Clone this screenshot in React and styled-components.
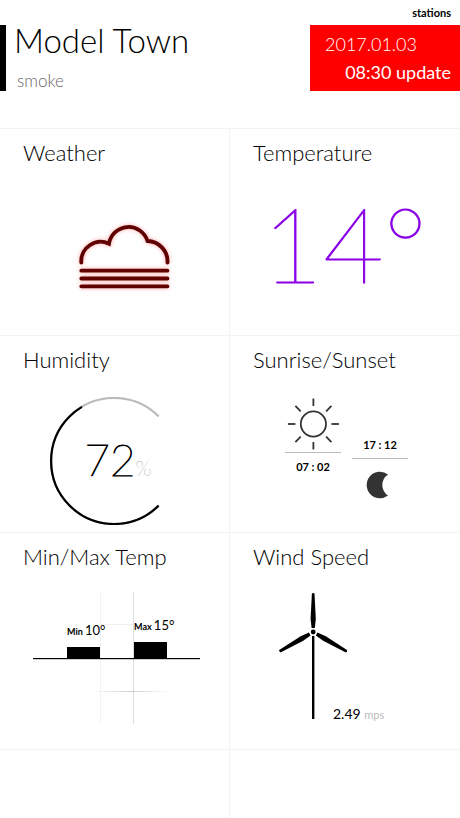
import React from "react";
import styled, { createGlobalStyle } from "styled-components";

const GlobalStyle = createGlobalStyle`
	* {
		box-sizing: border-box;
	}
	body {
		margin: 0;
		background: #fff;
		color: #000;
		font-family: Lato, sans-serif;
	}
`;

const Page = styled.main`
	display: flex;
	flex-direction: column;
	min-height: 100vh;
`;

const TopBar = styled.nav`
	display: flex;
	justify-content: flex-end;
	height: 25px;
	padding: 6px 9px 0;
`;

const StationsLink = styled.a`
	color: #000;
	font-size: 11px;
	font-weight: 700;
	line-height: 14px;
	text-decoration: none;
`;

const Header = styled.header`
	display: flex;
	justify-content: space-between;
	padding-bottom: 37px;
`;

const Place = styled.div`
	border-left: 6px solid #000;
	padding-left: 8px;
`;

const City = styled.h1`
	margin: 0;
	font-size: 33px;
	font-weight: 300;
	line-height: 30px;
`;

const Condition = styled.p`
	margin: 15px 0 0 3px;
	color: #666;
	font-size: 17px;
	font-weight: 300;
	line-height: 21px;
`;

const Updated = styled.div`
	display: flex;
	flex-direction: column;
	justify-content: center;
	gap: 6px;
	width: 150px;
	height: 66px;
	padding: 0 9px 0 15px;
	background: #f00;
	color: #fff;
	font-size: 18px;
	line-height: 22px;
`;

const UpdatedDate = styled.span`
	font-weight: 300;
`;

const UpdatedTime = styled.span`
	text-align: right;
`;

const Grid = styled.div`
	display: grid;
	grid-template-columns: 1fr 1fr;
	grid-template-rows: repeat(3, auto) 1fr;
	flex: 1;
	border-top: 1px solid #f3f3f3;
`;

const Card = styled.section`
	display: flex;
	flex-direction: column;
	padding: 9px 0 ${props => props.$bottom || 0}px;
	border-bottom: ${props => (props.$last ? "none" : "1px solid #f3f3f3")};

	&:nth-child(odd) {
		border-right: 1px solid #f3f3f3;
	}
`;

const CardTitle = styled.h2`
	margin: 0 0 0 23px;
	font-size: 22px;
	font-weight: 300;
	line-height: 30px;
`;

const CardBody = styled.div`
	display: flex;
	padding: ${props => props.$pad};
`;

const FogIcon = styled.svg`
	filter: drop-shadow(0 0 2px rgba(255, 0, 0, 0.35));
	overflow: visible;
`;

const BigTemp = styled.div`
	color: #8a00e6;
	font-size: 105px;
	font-weight: 100;
	line-height: 104px;
	-webkit-text-stroke: 1px #8a00e6;
`;

const Gauge = styled.div`
	display: grid;
	place-items: center;

	> * {
		grid-area: 1 / 1;
	}
`;

const GaugeValue = styled.div`
	display: flex;
	align-items: baseline;
	padding: 5px 0 0 8px;
	font-size: 44px;
	font-weight: 100;
	line-height: 54px;
	-webkit-text-stroke: 1px #000;
`;

const GaugeUnit = styled.span`
	color: #555;
	font-size: 21px;
	-webkit-text-stroke: 0;
`;

const SunTimes = styled.div`
	display: flex;
	gap: 11px;
`;

const SunColumn = styled.div`
	display: flex;
	flex-direction: column;
	align-items: center;
	width: 56px;
	padding-top: ${props => (props.$late ? 40 : 0)}px;
	font-size: 11px;
	font-weight: 700;
	line-height: 14px;
`;

const SunLine = styled.hr`
	width: 100%;
	margin: ${props => (props.$late ? "6px 0 12px" : "2px 0 7px")};
	border: 0;
	border-top: 1px solid #bbb;
`;

const Wind = styled.div`
	display: flex;
	align-items: baseline;
`;

const WindSpeed = styled.span`
	margin-left: -14px;
	font-size: 14px;
	line-height: 16px;
`;

const WindUnit = styled.span`
	color: #bbb;
	font-size: 11px;
`;

const RAY_ANGLES = [0, 45, 90, 135, 180, 225, 270, 315];
const BLADE_ANGLES = [0, 120, 240];

function Fog() {
	return (
		<FogIcon
			width="96"
			height="72"
			fill="none"
			stroke="#600000"
			strokeWidth="3.8"
			strokeLinecap="round"
			aria-label="smoke"
		>
			<path d="M4.3 39.7 A19.5 19.5 0 0 1 32 20.7 A19.8 19.8 0 0 1 70.5 18 A20.5 20.5 0 0 1 90.5 39.7" />
			<path d="M4.3 47.7 H90.5 M4.3 55.5 H90.5 M4.3 63.3 H90.5" />
		</FogIcon>
	);
}

function Humidity({ value }) {
	const arc = "M108.6 108.6 A63 63 0 1 1 108.6 19.4";
	return (
		<Gauge>
			<svg width="128" height="128" fill="none" strokeWidth="2.2">
				<path d={arc} stroke="#bbb" />
				<path
					d={arc}
					stroke="#000"
					pathLength="100"
					strokeDasharray={`${value} 100`}
				/>
			</svg>
			<GaugeValue>
				{value}
				<GaugeUnit>%</GaugeUnit>
			</GaugeValue>
		</Gauge>
	);
}

function Sun() {
	return (
		<svg width="52" height="52" fill="none" stroke="#333" strokeWidth="1.8">
			<circle cx="26.4" cy="26" r="12.6" />
			{RAY_ANGLES.map(angle => (
				<path
					key={angle}
					d="M26.4 0.5 V8"
					transform={`rotate(${angle} 26.4 26)`}
				/>
			))}
		</svg>
	);
}

function Moon() {
	return (
		<svg width="28" height="28" fill="#333">
			<path d="M22 3.4 A13.3 13.3 0 1 0 22 24.6 A12.7 12.7 0 0 1 22 3.4 Z" />
		</svg>
	);
}

function MinMaxChart({ min, max }) {
	const baseline = 67;
	return (
		<svg width="167" height="132">
			<defs>
				<linearGradient id="fade">
					<stop offset="0" stopColor="#ccc" stopOpacity="0" />
					<stop offset="0.5" stopColor="#ccc" />
					<stop offset="1" stopColor="#ccc" stopOpacity="0" />
				</linearGradient>
			</defs>
			<rect x="67" y="0" width="1" height="132" fill="#f3f3f3" />
			<rect x="100" y="0" width="1" height="132" fill="#ddd" />
			<rect x="68" y="32" width="32" height="1" fill="#eee" />
			<rect x="60" y="99" width="76" height="1" fill="url(#fade)" />
			<rect x="34" y={baseline - 12} width="33" height="12" />
			<rect x="101" y={baseline - 17} width="33" height="17" />
			<rect x="0" y={baseline - 1} width="167" height="1.2" />
			<text x="34" y="43" fontSize="13">
				<tspan fontSize="9" fontWeight="700">Min </tspan>
				{min}°
			</text>
			<text x="101" y="38" fontSize="13">
				<tspan fontSize="9" fontWeight="700">Max </tspan>
				{max}°
			</text>
		</svg>
	);
}

function Turbine() {
	return (
		<svg width="68" height="127">
			<rect x="33" y="44" width="2.4" height="83" />
			<circle cx="34.2" cy="40" r="2.4" />
			{BLADE_ANGLES.map(angle => (
				<path
					key={angle}
					d="M32.9 1.5 Q34.2 0.5 35.5 1.5 L36.8 27 L35.8 36 H32.6 L31.6 27 Z"
					transform={`rotate(${angle} 34.2 40)`}
				/>
			))}
		</svg>
	);
}

function App() {
	return (
		<Page>
			<GlobalStyle />
			<TopBar>
				<StationsLink href="#stations">stations</StationsLink>
			</TopBar>
			<Header>
				<Place>
					<City>Model Town</City>
					<Condition>smoke</Condition>
				</Place>
				<Updated>
					<UpdatedDate>2017.01.03</UpdatedDate>
					<UpdatedTime>08:30 update</UpdatedTime>
				</Updated>
			</Header>
			<Grid>
				<Card $bottom={40}>
					<CardTitle>Weather</CardTitle>
					<CardBody $pad="55px 0 0 77px">
						<Fog />
					</CardBody>
				</Card>
				<Card>
					<CardTitle>Temperature</CardTitle>
					<CardBody $pad="22px 0 0 32px">
						<BigTemp>14°</BigTemp>
					</CardBody>
				</Card>
				<Card $bottom={7}>
					<CardTitle>Humidity</CardTitle>
					<CardBody $pad="22px 0 0 50px">
						<Humidity value={72} />
					</CardBody>
				</Card>
				<Card>
					<CardTitle>Sunrise/Sunset</CardTitle>
					<CardBody $pad="23px 0 0 55px">
						<SunTimes>
							<SunColumn>
								<Sun />
								<SunLine />
								<time>07 : 02</time>
							</SunColumn>
							<SunColumn $late>
								<time>17 : 12</time>
								<SunLine $late />
								<Moon />
							</SunColumn>
						</SunTimes>
					</CardBody>
				</Card>
				<Card $bottom={25}>
					<CardTitle>Min/Max Temp</CardTitle>
					<CardBody $pad="20px 0 0 33px">
						<MinMaxChart min={10} max={15} />
					</CardBody>
				</Card>
				<Card>
					<CardTitle>Wind Speed</CardTitle>
					<CardBody $pad="20px 0 0 49px">
						<Wind>
							<Turbine />
							<WindSpeed>
								2.49 <WindUnit>mps</WindUnit>
							</WindSpeed>
						</Wind>
					</CardBody>
				</Card>
				<Card $last />
				<Card $last />
			</Grid>
		</Page>
	);
}

export default App;
